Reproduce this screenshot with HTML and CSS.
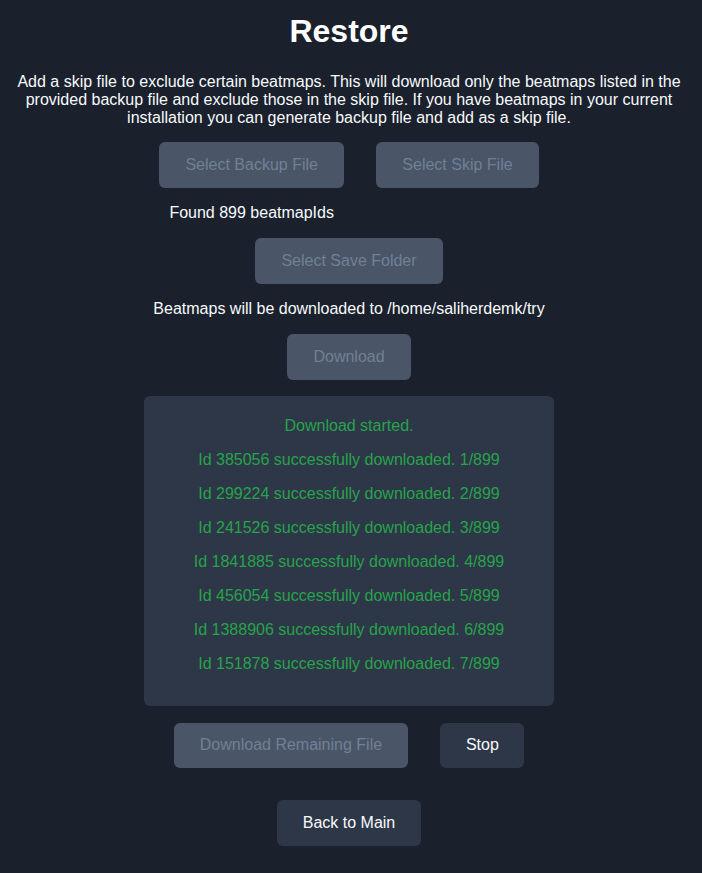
FILE: index.html
```html
<!DOCTYPE html>
<html lang="en">
<head>
<meta charset="utf-8">
<title>Restore</title>
<link rel="stylesheet" href="styles.css">
</head>
<body>
<main class="page">
  <h1 class="title">Restore</h1>
  <p class="intro">Add a skip file to exclude certain beatmaps. This will download only the beatmaps listed in the provided backup file and exclude those in the skip file. If you have beatmaps in your current installation you can generate backup file and add as a skip file.</p>
  <div class="file-row">
    <div class="file-col">
      <button class="btn btn-disabled" disabled>Select Backup File</button>
      <span class="status">Found 899 beatmapIds</span>
    </div>
    <div class="file-col">
      <button class="btn btn-disabled" disabled>Select Skip File</button>
    </div>
  </div>
  <button class="btn btn-disabled" disabled>Select Save Folder</button>
  <span class="status">Beatmaps will be downloaded to /home/saliherdemk/try</span>
  <button class="btn btn-disabled" disabled>Download</button>
  <div class="log">
    <p class="log-line">Download started.</p>
    <p class="log-line">Id 385056 successfully downloaded. 1/899</p>
    <p class="log-line">Id 299224 successfully downloaded. 2/899</p>
    <p class="log-line">Id 241526 successfully downloaded. 3/899</p>
    <p class="log-line">Id 1841885 successfully downloaded. 4/899</p>
    <p class="log-line">Id 456054 successfully downloaded. 5/899</p>
    <p class="log-line">Id 1388906 successfully downloaded. 6/899</p>
    <p class="log-line">Id 151878 successfully downloaded. 7/899</p>
  </div>
  <div class="action-row">
    <button class="btn btn-disabled" disabled>Download Remaining File</button>
    <button class="btn btn-dark">Stop</button>
  </div>
  <button class="btn btn-dark back">Back to Main</button>
</main>
</body>
</html>
```

FILE: styles.css
```css
html, body {
  margin: 0;
  padding: 0;
  background: #1a202c;
}

body {
  font-family: "Liberation Sans", Arial, sans-serif;
  font-size: 16px;
  color: #f7fafc;
  min-height: 873px;
}

.page {
  display: flex;
  flex-direction: column;
  align-items: center;
  gap: 16px;
  padding: 13px 4px 0 0;
}

.title {
  margin: 0 0 7px;
  font-size: 32px;
  font-weight: bold;
  line-height: normal;
  color: #ffffff;
}

.intro {
  margin: 0 0 -1px;
  padding: 0 16px;
  text-align: center;
  line-height: normal;
}

.file-row {
  display: flex;
  gap: 32px;
  align-items: flex-start;
}

.file-col {
  display: flex;
  flex-direction: column;
  align-items: center;
  gap: 16px;
}

.status {
  line-height: 18.4px;
}

.btn {
  font-family: inherit;
  font-size: 16px;
  line-height: 18.4px;
  padding: 13.6px 25.6px;
  border: none;
  border-radius: 6px;
  cursor: pointer;
}

.btn-disabled {
  background: #4a5568;
  color: #718096;
  padding: 13.6px 26.2px;
  cursor: default;
}

.btn-dark {
  background: #2d3748;
  color: #f7fafc;
}

.log {
  box-sizing: border-box;
  width: 410px;
  height: 310px;
  padding: 21px 20px 20px;
  background: #2d3748;
  border-radius: 6px;
  display: flex;
  flex-direction: column;
  align-items: center;
  gap: 16px;
}

.log-line {
  margin: 0;
  line-height: 18px;
  color: #27a34a;
}

.action-row {
  display: flex;
  gap: 32px;
  margin-top: 1px;
}

.back {
  margin-top: 16px;
}
```
